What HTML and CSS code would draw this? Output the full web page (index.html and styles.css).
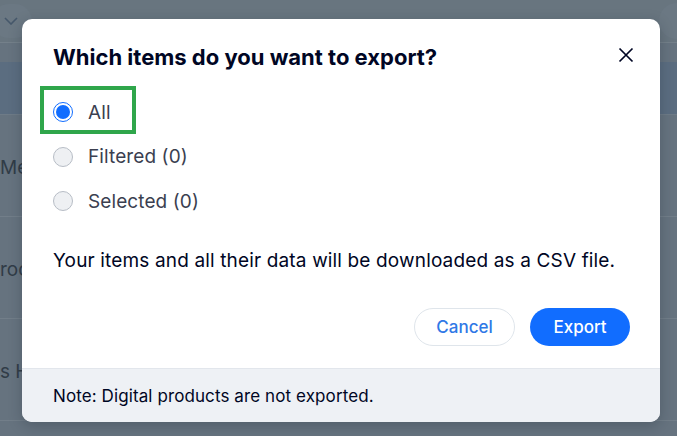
FILE: index.html
```html
<!DOCTYPE html>
<html lang="en">
<head>
<meta charset="utf-8">
<title>Export items</title>
<link rel="stylesheet" href="styles.css">
</head>
<body>
<div class="page">
  <div class="topbar">
    <div class="pill-left">
      <svg class="chev" width="14" height="8" viewBox="0 0 14 8"><path d="M1 1l6 6 6-6" fill="none" stroke="#46586b" stroke-width="1.6"/></svg>
    </div>
    <div class="pill-right"></div>
  </div>
  <div class="gap-row"></div>
  <div class="head-row"></div>
  <div class="row"><span class="cell-l">Me</span></div>
  <div class="row"><span class="cell-l">roo</span></div>
  <div class="row"><span class="cell-l">s H</span></div>
</div>

<div class="modal">
  <div class="modal-body">
    <div class="modal-head">
      <h1 class="title">Which items do you want to export?</h1>
      <button class="close" aria-label="Close">
        <svg width="16" height="16" viewBox="0 0 16 16"><path d="M1.5 1.5l13 13M14.5 1.5l-13 13" stroke="#000624" stroke-width="1.7" fill="none"/></svg>
      </button>
    </div>
    <div class="options">
      <label class="option">
        <span class="radio checked"><span class="dot"></span></span>
        <span class="opt-text">All</span>
        <span class="highlight"></span>
      </label>
      <label class="option">
        <span class="radio"></span>
        <span class="opt-text">Filtered (0)</span>
      </label>
      <label class="option">
        <span class="radio"></span>
        <span class="opt-text">Selected (0)</span>
      </label>
    </div>
    <p class="desc">Your items and all their data will be downloaded as a CSV file.</p>
    <div class="actions">
      <button class="btn btn-secondary">Cancel</button>
      <button class="btn btn-primary">Export</button>
    </div>
  </div>
  <div class="modal-foot">Note: Digital products are not exported.</div>
</div>
</body>
</html>
```
FILE: styles.css
```css
* { box-sizing: border-box; }
html, body { margin: 0; padding: 0; }
body {
  width: 677px;
  height: 436px;
  overflow: hidden;
  background: #66737f;
  font-family: "Inter", "Liberation Sans", sans-serif;
  position: relative;
}
.page {
  display: flex;
  flex-direction: column;
  height: 436px;
}
.topbar {
  height: 43px;
  display: flex;
  justify-content: space-between;
  align-items: center;
  background: #68757f;
  border-bottom: 1px solid #74808a;
}
.pill-left {
  width: 40px;
  height: 34px;
  margin-left: -8px;
  border-radius: 17px;
  background: #6b7883;
  display: flex;
  align-items: center;
  justify-content: flex-end;
  padding-right: 14px;
}
.pill-right {
  width: 40px;
  height: 36px;
  margin-right: -22px;
  border-radius: 18px;
  background: #6b7883;
}
.gap-row { height: 19px; background: #66737f; }
.head-row {
  height: 53px;
  background: #5b6d80;
  border-bottom: 1px solid #6e7b87;
}
.row {
  height: 102px;
  border-bottom: 1px solid #727e89;
  display: flex;
  align-items: center;
  padding-top: 4px;
  color: #313c47;
  font-size: 19px;
}
.cell-l { margin-left: 0; }

.modal {
  position: absolute;
  left: 22px;
  top: 19px;
  width: 638px;
  height: 403px;
  background: #fff;
  border-radius: 10px;
  box-shadow: 0 4px 14px rgba(20, 30, 45, 0.25);
  overflow: hidden;
  display: flex;
  flex-direction: column;
}
.modal-body {
  flex: 1;
  padding: 24px 24px 0 31px;
  display: flex;
  flex-direction: column;
}
.modal-head {
  display: flex;
  justify-content: space-between;
  align-items: flex-start;
}
.title {
  margin: 0;
  font-size: 22px;
  line-height: 28px;
  font-weight: 700;
  color: #000624;
  letter-spacing: 0;
}
.close {
  border: 0;
  background: none;
  padding: 0;
  margin: 4px 2px 0 0;
  width: 16px;
  height: 16px;
  display: flex;
}
.options {
  margin-top: 19px;
  display: flex;
  flex-direction: column;
}
.option {
  position: relative;
  height: 44.5px;
  display: flex;
  align-items: center;
  gap: 15px;
  font-size: 19px;
  letter-spacing: 0.1px;
  color: #3b3f50;
}
.radio {
  width: 20px;
  height: 20px;
  flex: none;
  border-radius: 50%;
  border: 1px solid #b7bdc6;
  background: #eef0f3;
  display: flex;
  align-items: center;
  justify-content: center;
}
.radio.checked {
  border-color: #116dff;
  background: #fff;
}
.dot {
  width: 14px;
  height: 14px;
  border-radius: 50%;
  background: #116dff;
}
.highlight {
  position: absolute;
  left: -13px;
  top: -4px;
  width: 96px;
  height: 48px;
  border: 4px solid #2fa64b;
}
.desc {
  margin: 25px 0 0;
  font-size: 19px;
  line-height: 24px;
  letter-spacing: 0.15px;
  color: #000624;
}
.actions {
  margin-top: 35px;
  display: flex;
  justify-content: flex-end;
  gap: 15px;
  padding-right: 6px;
}
.btn {
  height: 38px;
  border-radius: 19px;
  font-family: inherit;
  font-size: 17px;
  font-weight: 500;
  padding: 0;
}
.btn-secondary {
  width: 101px;
  background: #fff;
  border: 1px solid #dfe5eb;
  color: #2f78e6;
}
.btn-primary {
  width: 100px;
  background: #116dff;
  border: 0;
  color: #fff;
}
.modal-foot {
  height: 54px;
  background: #eef1f5;
  border-top: 1px solid #e2e6ec;
  display: flex;
  align-items: center;
  padding-left: 31px;
  font-size: 17px;
  letter-spacing: 0.1px;
  color: #000624;
}
```
